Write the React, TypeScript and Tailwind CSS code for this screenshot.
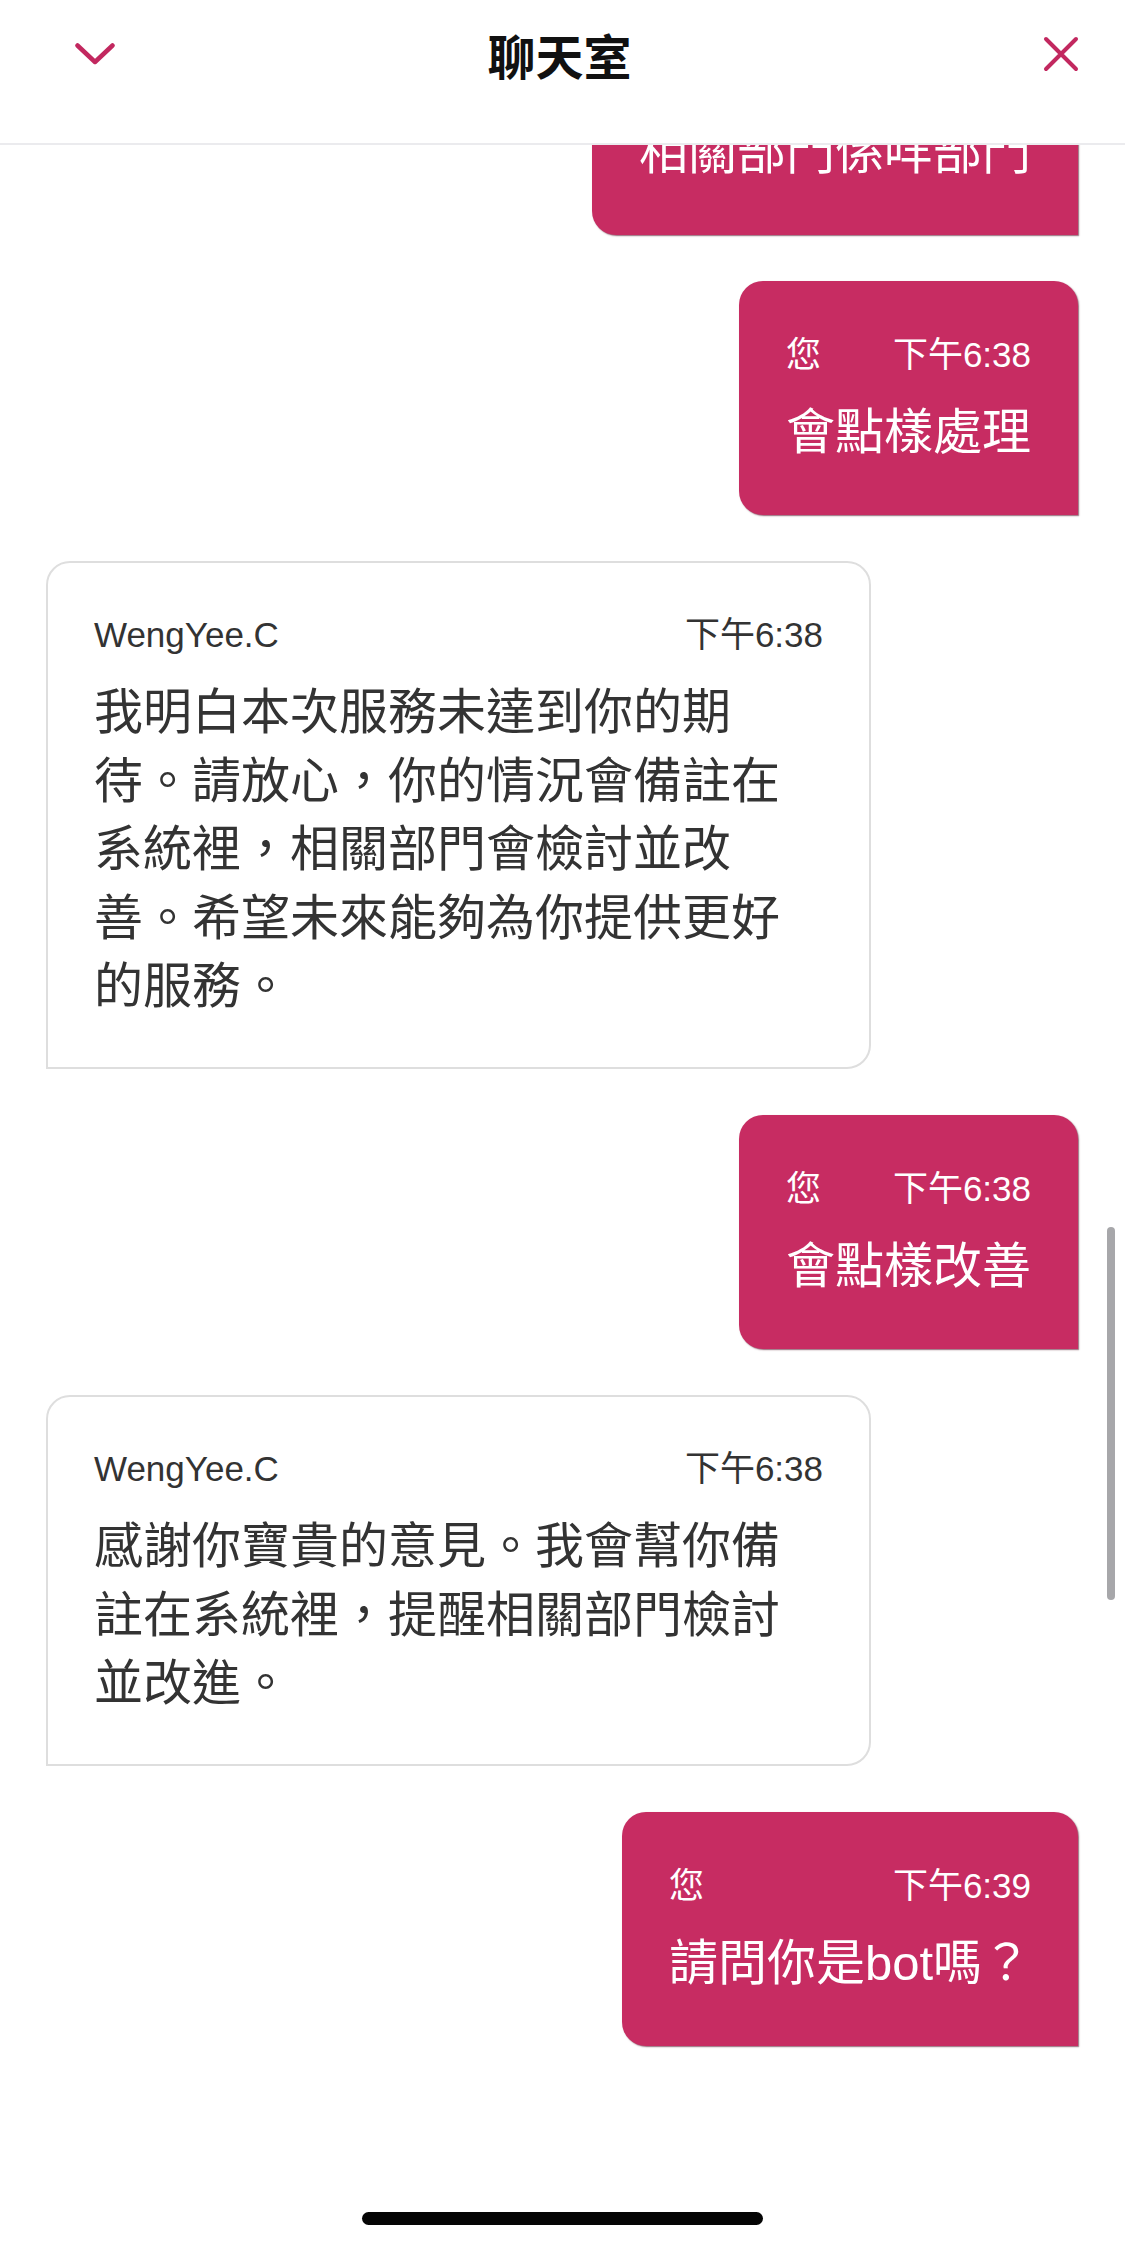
import React from "react";

type Msg = { from: "me" | "bot"; time: string; text: string };

const messages: Msg[] = [
  { from: "me", time: "下午6:38", text: "相關部門係咩部門" },
  { from: "me", time: "下午6:38", text: "會點樣處理" },
  {
    from: "bot",
    time: "下午6:38",
    text: "我明白本次服務未達到你的期待。請放心，你的情況會備註在系統裡，相關部門會檢討並改善。希望未來能夠為你提供更好的服務。",
  },
  { from: "me", time: "下午6:38", text: "會點樣改善" },
  {
    from: "bot",
    time: "下午6:38",
    text: "感謝你寶貴的意見。我會幫你備註在系統裡，提醒相關部門檢討並改進。",
  },
  { from: "me", time: "下午6:39", text: "請問你是bot嗎？" },
];

function UserBubble({ time, text, first }: { time: string; text: string; first?: boolean }) {
  return (
    <div className={first ? "flex justify-end -mt-[144px]" : "flex justify-end"}>
      <div className="flex flex-col rounded-[24px] rounded-br-none bg-[#c72c62] px-[47px] pt-[52px] pb-[48px] text-white shadow-[1px_1px_1.5px_rgba(70,0,25,0.6)]">
        {first ? (
          // meta row of this one is scrolled away under the header
          <div className="h-[44px]" />
        ) : (
          <div className="flex justify-between text-[35px] leading-[44px]">
            <span>您</span>
            <span>{time}</span>
          </div>
        )}
        <div className="mt-[21px] text-[49px] leading-[68.5px]">{text}</div>
      </div>
    </div>
  );
}

function BotBubble({ time, text }: { time: string; text: string }) {
  return (
    <div className="flex justify-start">
      <div className="w-[825px] rounded-[24px] rounded-bl-none border-2 border-[#dedede] bg-white px-[46px] pt-[50px] pb-[46px] text-[#333]">
        <div className="flex justify-between text-[35px] leading-[44px]">
          <span>WengYee.C</span>
          <span>{time}</span>
        </div>
        <div className="mt-[21px] text-[49px] leading-[68.5px]">{text}</div>
      </div>
    </div>
  );
}

export default function App() {
  return (
    <div className="relative flex h-[2250px] w-[1125px] flex-col overflow-hidden bg-white font-['Liberation_Sans','Noto_Sans_CJK_TC',sans-serif]">
      <header className="relative z-10 h-[145px] shrink-0 border-b-2 border-[#ebebee] bg-white">
        <div className="flex h-[108px] items-center">
          <div className="flex w-[160px] items-center pl-[75px]">
            <button className="flex h-[40px] w-[40px] items-center">
              <svg width="40" height="22" viewBox="0 0 40 22" fill="none">
                <polyline
                  points="2.5,2.5 20,19 37.5,2.5"
                  stroke="#c2285f"
                  strokeWidth="4.5"
                  strokeLinecap="round"
                  strokeLinejoin="round"
                />
              </svg>
            </button>
          </div>
          <h1 className="flex-1 text-center text-[48px] font-bold leading-none text-[#111] font-['Noto_Sans_CJK_TC',sans-serif] -translate-x-[3px]">
            聊天室
          </h1>
          <div className="flex w-[160px] items-center justify-end pr-[46px]">
            <button className="flex h-[36px] w-[36px] items-center justify-center">
              <svg width="36" height="36" viewBox="0 0 36 36" fill="none">
                <path d="M3 3L33 33M33 3L3 33" stroke="#c2285f" strokeWidth="4" strokeLinecap="round" />
              </svg>
            </button>
          </div>
        </div>
      </header>

      <main className="relative flex-1 overflow-hidden">
        <div className="flex flex-col gap-[46.5px] pl-[46px] pr-[47px]">
          {messages.map((m, i) =>
            m.from === "me" ? (
              <UserBubble key={i} time={m.time} text={m.text} first={i === 0} />
            ) : (
              <BotBubble key={i} time={m.time} text={m.text} />
            )
          )}
        </div>
      </main>

      {/* scroll indicator */}
      <div className="absolute left-[1107px] top-[1227px] h-[373px] w-[8px] rounded-full bg-[#a7a7aa]" />
      {/* home indicator */}
      <div className="absolute bottom-[25px] left-[362px] h-[13px] w-[401px] rounded-full bg-[#050505]" />
    </div>
  );
}
